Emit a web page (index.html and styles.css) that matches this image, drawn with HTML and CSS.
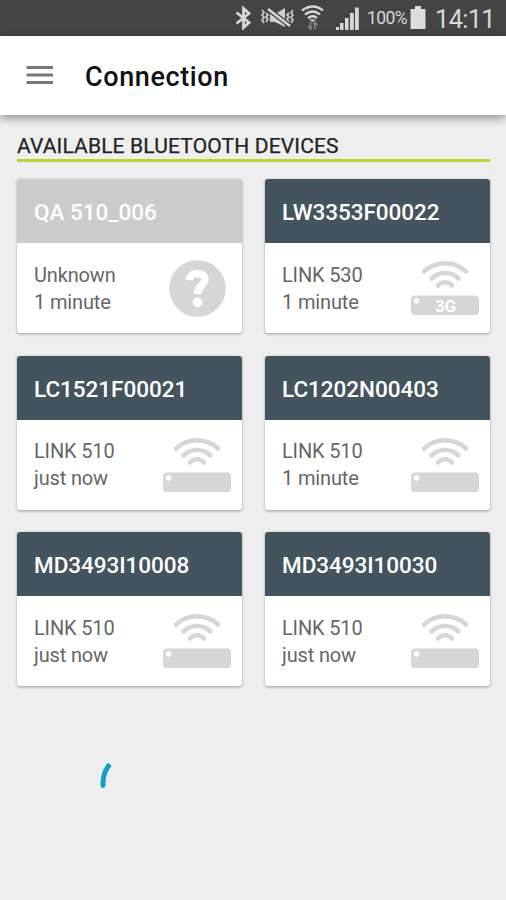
FILE: index.html
```html
<!DOCTYPE html>
<html lang="en">
<head>
<meta charset="utf-8">
<title>Connection</title>
<link rel="stylesheet" href="styles.css">
</head>
<body>
<svg class="defs" width="0" height="0" aria-hidden="true">
  <symbol id="link" viewBox="0 0 68 56">
    <g fill="none" stroke="#d6d6d6" stroke-width="4.600" stroke-linecap="round">
      <path d="M13 11.500Q22 3.300 34 3.300T55 11.500"/>
      <path d="M20.500 18.500Q26 13 34 13T47.500 18.500"/>
      <path d="M27 25.500Q30 22.300 34 22.300T41 25.500"/>
    </g>
    <rect x="0" y="35.500" width="68" height="19.500" rx="4" fill="#d6d6d6"/>
    <circle cx="5.500" cy="41" r="2.800" fill="#fff"/>
  </symbol>
</svg>
<div class="status">
  <svg class="status-icons" width="132" height="36" viewBox="0 0 132 36">
    <path d="M2.500 12.500L15 22.500L9.500 27.500V8.500L15 13.500L2.500 23.500" fill="none" stroke="#d8d8d8" stroke-width="2.800"/>
    <g fill="none" stroke="#c8c8c8" stroke-width="1.800">
      <path d="M28 10l2 2.500-2 2.500 2 2.500-2 2.500 2 3M32 13l2 2-2 2 2 2-2 3M59 10l-2 2.500 2 2.500-2 2.500 2 2.500-2 3M55 13l-2 2 2 2-2 2 2 3"/>
    </g>
    <path d="M36 14h5l10-6v19l-10-5h-5z" fill="#d0d0d0"/>
    <path d="M34 9l22 17" stroke="#444" stroke-width="5"/>
    <path d="M34 9l22 17" stroke="#d8d8d8" stroke-width="2.400"/>
    <g fill="none" stroke="#d8d8d8" stroke-width="2.300">
      <path d="M68 10.500Q79 2.500 89 10.500M71 14.500Q79 8.500 86 14.500M74 18Q79 14.500 83 18"/>
    </g>
    <path d="M75 19.500h7l-3.500 2.500z" fill="#d8d8d8"/>
    <path d="M76.500 22v7M74 26l2.500 3 1.500-2M81 22v7M79.500 24l1.500-2 2.500 3" fill="none" stroke="#858585" stroke-width="1.700"/>
    <path d="M101 30v-3h3v3zM105 30v-7h3.500v7zM110 30V18h3.500v12zM115 30V13h3.800v17zM120 30V7.500h3.800V30z" fill="#d8d8d8" transform="translate(1)"/>
  </svg>
  <span class="percent">100%</span>
  <svg class="battery" width="16" height="36" viewBox="0 0 16 36"><path d="M5 6h6v3h4.500v20H0.500V9h4.500z" fill="#dcdcdc"/></svg>
  <span class="clock">14:11</span>
</div>
<header class="appbar">
  <svg class="menu" width="27" height="20" viewBox="0 0 27 20"><path d="M0.500 2.500h26.500M0.500 10h26.500M0.500 17.500h26.500" stroke="#777" stroke-width="2.800"/></svg>
  <h1>Connection</h1>
</header>
<main>
  <h2>AVAILABLE BLUETOOTH DEVICES</h2>
  <div class="grid">
    <article class="card unknown">
      <h3>QA 510_006</h3>
      <div class="body"><p>Unknown<br>1 minute</p>
        <svg class="question" width="57" height="57" viewBox="0 0 57 57"><circle cx="28.500" cy="28.500" r="28.300" fill="#d6d6d6"/><path d="M20 20C21.500 11 36.500 11.500 35.800 20C35.200 25.500 28.500 25.500 28.500 34" fill="none" stroke="#fff" stroke-width="7.500"/><circle cx="28.500" cy="42.300" r="4.900" fill="#fff"/></svg>
      </div>
    </article>
    <article class="card">
      <h3>LW3353F00022</h3>
      <div class="body"><p>LINK 530<br>1 minute</p>
        <svg class="link" width="68" height="56" viewBox="0 0 68 56"><use href="#link"/><text class="tag" x="34.500" y="51.500">3G</text></svg>
      </div>
    </article>
    <article class="card">
      <h3>LC1521F00021</h3>
      <div class="body"><p>LINK 510<br>just now</p><svg class="link" width="68" height="56"><use href="#link"/></svg></div>
    </article>
    <article class="card">
      <h3>LC1202N00403</h3>
      <div class="body"><p>LINK 510<br>1 minute</p><svg class="link" width="68" height="56"><use href="#link"/></svg></div>
    </article>
    <article class="card">
      <h3>MD3493I10008</h3>
      <div class="body"><p>LINK 510<br>just now</p><svg class="link" width="68" height="56"><use href="#link"/></svg></div>
    </article>
    <article class="card">
      <h3>MD3493I10030</h3>
      <div class="body"><p>LINK 510<br>just now</p><svg class="link" width="68" height="56"><use href="#link"/></svg></div>
    </article>
  </div>
  <svg class="spinner" width="14" height="28" viewBox="0 0 14 28"><path d="M3 23.500Q2.500 12 8.500 4" fill="none" stroke="#109fcb" stroke-width="5" stroke-linecap="round"/></svg>
</main>
</body>
</html>
```
FILE: styles.css
```css
* {
  box-sizing: border-box;
  margin: 0;
  padding: 0;
}

body {
  width: 506px;
  height: 900px;
  overflow: hidden;
  background: #eee;
  font-family: Roboto, sans-serif;
}

svg {
  display: block;
  flex: none;
}

.defs {
  position: absolute;
}

.status {
  display: flex;
  height: 36px;
  padding-left: 234px;
  background: #444;
  color: #d8d8d8;
  line-height: 36px;
  white-space: nowrap;
}

.percent {
  width: 44px;
  padding-left: 1px;
  font-size: 17.5px;
  letter-spacing: -0.6px;
  line-height: 37px;
}

.battery {
  margin-right: 9px;
}

.clock {
  font-size: 25.5px;
  letter-spacing: -0.7px;
  line-height: 38px;
}

.appbar {
  position: relative;
  display: flex;
  align-items: center;
  height: 79px;
  padding-left: 26px;
  background: #fff;
  box-shadow: 0 3px 9px rgba(0, 0, 0, 0.4);
}

.menu {
  margin-top: -2px;
}

h1 {
  margin: 2px 0 0 32px;
  color: #111;
  font-size: 27px;
  font-weight: 500;
  letter-spacing: 0.6px;
  line-height: 32px;
}

main {
  padding: 17px 16px 0 17px;
}

h2 {
  height: 30px;
  border-bottom: 3px solid #bad532;
  color: #222;
  font-size: 21px;
  font-weight: 400;
  letter-spacing: 0.15px;
  line-height: 29px;
  white-space: nowrap;
  -webkit-text-stroke: 0.25px #222;
}

.grid {
  display: grid;
  grid-template-columns: 225px 225px;
  grid-auto-rows: 154px;
  gap: 22.5px 23px;
  margin-top: 17.4px;
}

.card {
  overflow: hidden;
  border-radius: 3px;
  background: #fff;
  box-shadow: 0 1px 3px rgba(0, 0, 0, 0.35);
}

h3 {
  height: 64px;
  padding-left: 17px;
  background: #44545e;
  color: #fff;
  font-size: 22.5px;
  font-weight: 500;
  letter-spacing: -0.04px;
  line-height: 67px;
  white-space: nowrap;
}

.unknown h3 {
  background: #cbcbcb;
  letter-spacing: 0;
}

.body {
  display: flex;
  justify-content: space-between;
  padding: 17px 11px 0 17px;
  color: #666;
  font-size: 20px;
  letter-spacing: -0.15px;
  line-height: 27px;
}

.body p {
  padding-top: 1.2px;
}

.question {
  margin-right: 5.5px;
}

.tag {
  fill: #fff;
  font-size: 17px;
  font-weight: 700;
  text-anchor: middle;
}

.spinner {
  margin: 75.5px 0 0 83px;
}
```
